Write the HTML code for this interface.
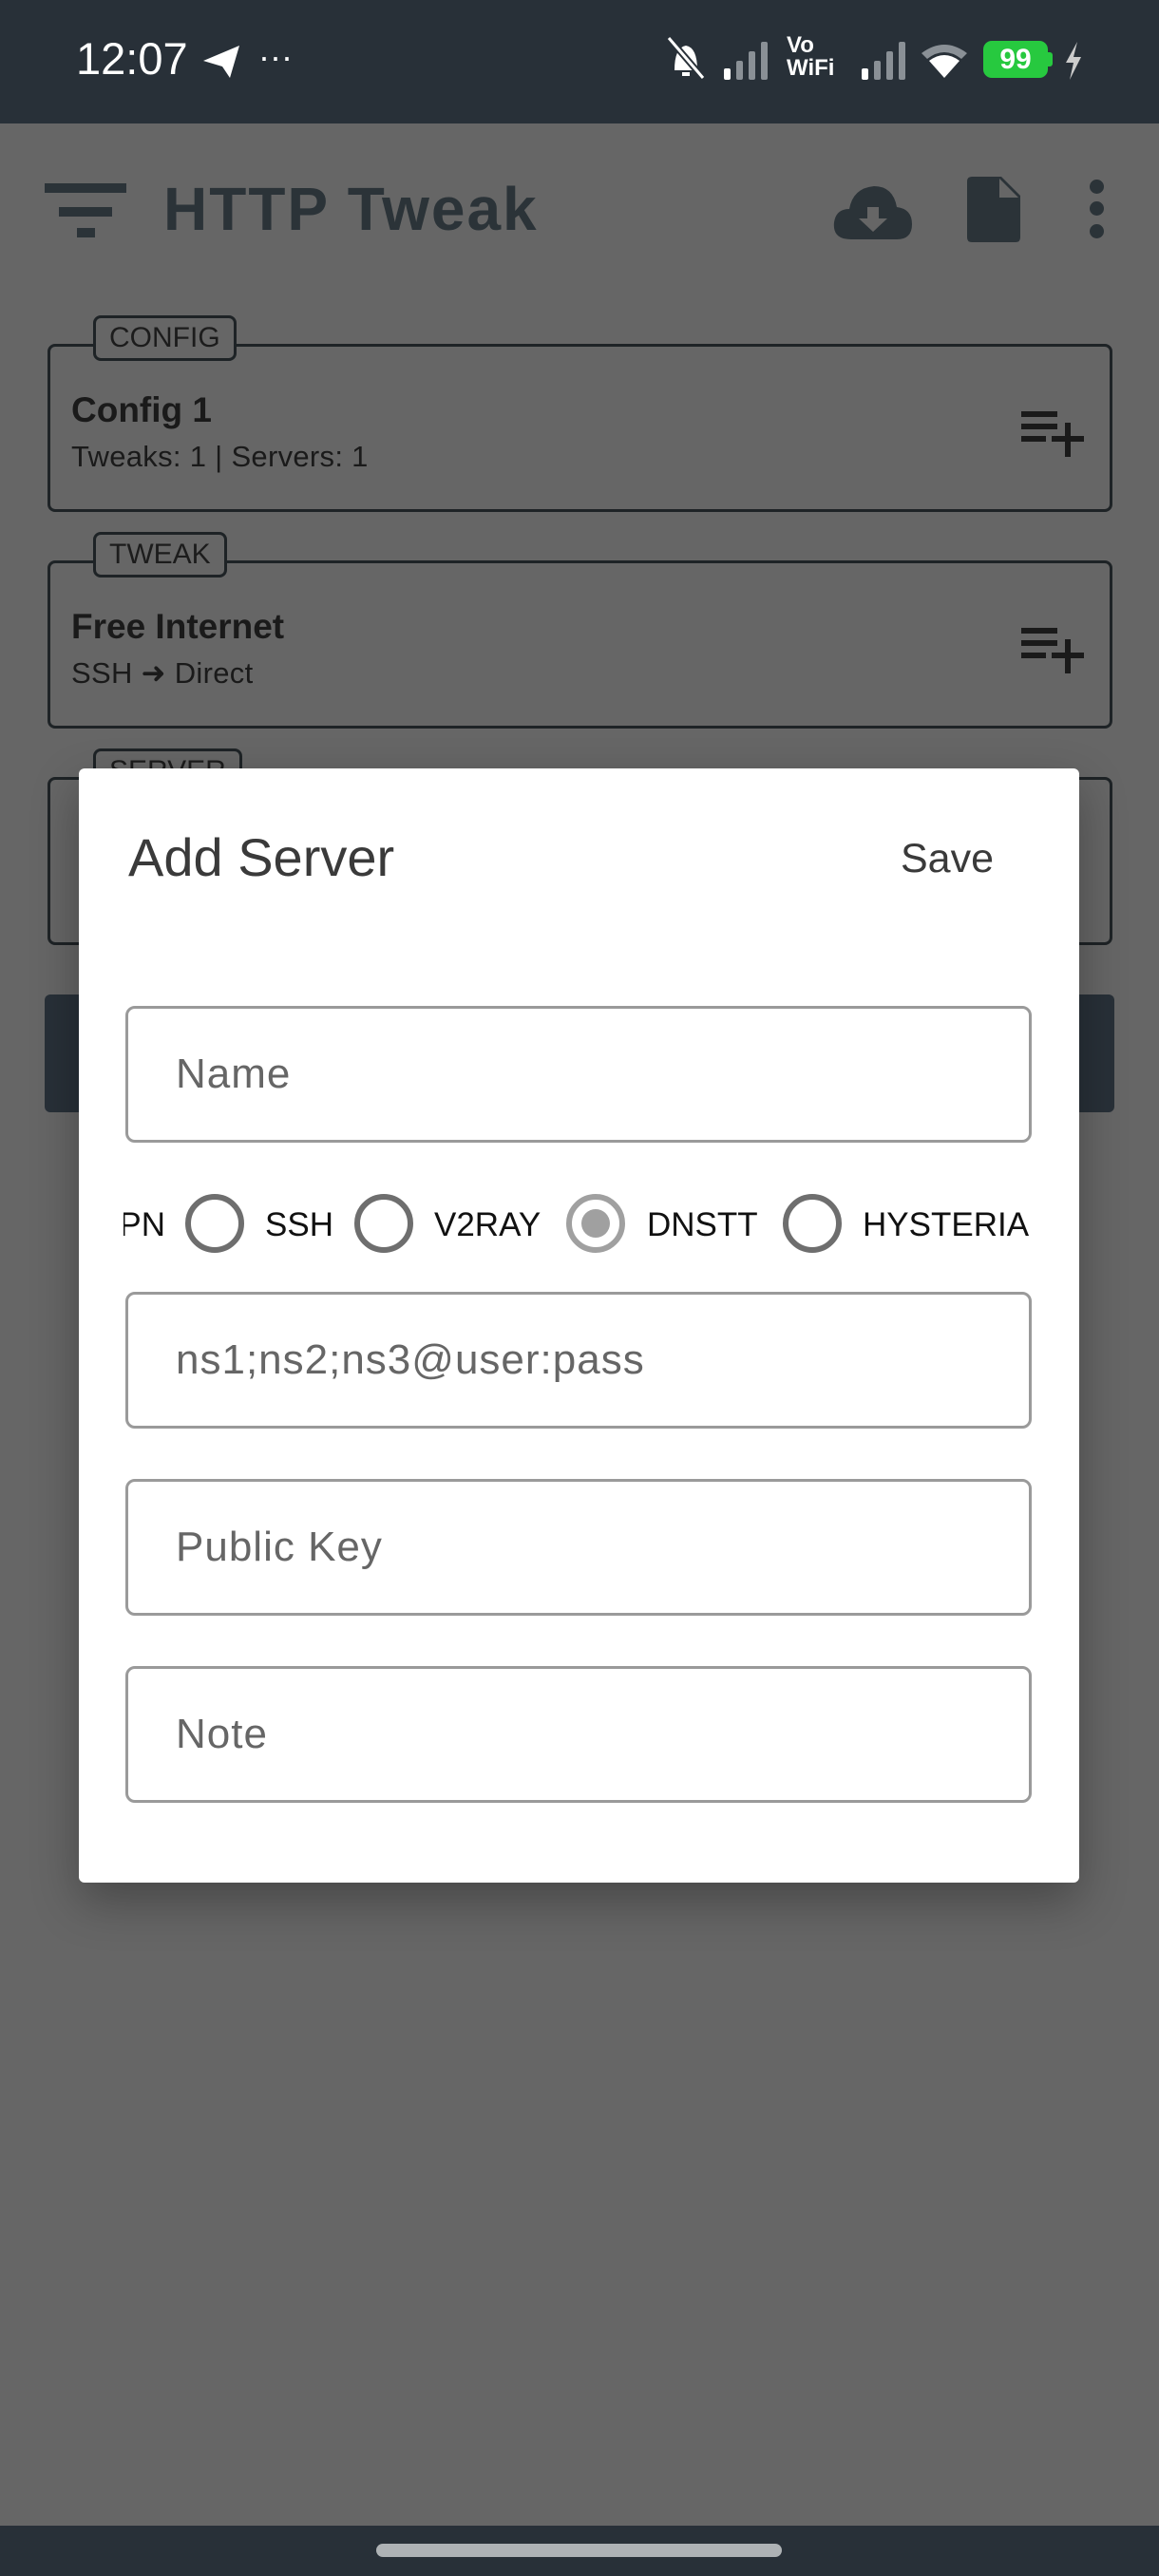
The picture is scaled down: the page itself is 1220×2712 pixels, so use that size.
<!DOCTYPE html>
<html><head><meta charset="utf-8"><style>
*{margin:0;padding:0;box-sizing:border-box}
body{width:1220px;height:2712px;position:relative;overflow:hidden;background:#666;font-family:"Liberation Sans",sans-serif}
.abs{position:absolute}
.sb{left:0;top:0;width:1220px;height:130px;background:#283038}
.card{border:3px solid #1e2326;border-radius:8px;left:50px;width:1121px;height:177px}
.lbl{border:3px solid #1e2326;border-radius:8px;background:#666;font-size:30px;color:#1c1c1c;height:48px;line-height:42px;padding:0 14px;left:98px}
.t1{font-size:37px;font-weight:bold;color:#1a1a1a;left:75px}
.t2{font-size:31px;color:#1a1a1a;left:75px;letter-spacing:0.3px}
.field{left:132px;width:954px;height:144px;border:3px solid #9a9a9a;border-radius:10px;background:#fff}
.field span{position:absolute;left:50px;top:0;line-height:138px;font-size:44px;color:#666;letter-spacing:1px}
.radio{width:62px;height:62px;border-radius:50%;border:6px solid #6e6e6e;top:1257px}
.rt{font-size:35px;color:#111;top:1269px;line-height:42px}
</style></head><body>
<div class="abs sb"></div>
<div class="abs" style="left:80px;top:32px;font-size:47px;color:#fff;line-height:60px">12:07</div>
<svg class="abs" style="left:212px;top:46px" width="44" height="38" viewBox="0 0 44 38"><path d="M2 18 L40 2 L30 36 L22 24 Z" fill="#fff"/></svg>
<div class="abs" style="left:272px;top:40px;font-size:36px;color:#fff;line-height:40px">···</div>
<svg class="abs" style="left:692px;top:36px" width="60" height="50" viewBox="0 0 60 50"><path d="M18 38 Q18 14 30 12 Q42 14 42 38 Z M26 40 h8 v4 h-8z" fill="#fff"/><line x1="12" y1="4" x2="48" y2="46" stroke="#283038" stroke-width="7"/><line x1="12" y1="4" x2="48" y2="46" stroke="#fff" stroke-width="3"/></svg>
<svg class="abs" style="left:760px;top:44px" width="50" height="40" viewBox="0 0 50 40"><rect x="2" y="28" width="7" height="12" rx="2" fill="#fff"/><rect x="15" y="20" width="7" height="20" rx="2" fill="#8a9096"/><rect x="28" y="10" width="7" height="30" rx="2" fill="#8a9096"/><rect x="41" y="0" width="7" height="40" rx="2" fill="#8a9096"/></svg>
<div class="abs" style="left:828px;top:36px;font-size:24px;font-weight:bold;color:#fff;line-height:24px">Vo<br>WiFi</div>
<svg class="abs" style="left:905px;top:44px" width="50" height="40" viewBox="0 0 50 40"><rect x="2" y="28" width="7" height="12" rx="2" fill="#fff"/><rect x="15" y="20" width="7" height="20" rx="2" fill="#8a9096"/><rect x="28" y="10" width="7" height="30" rx="2" fill="#8a9096"/><rect x="41" y="0" width="7" height="40" rx="2" fill="#8a9096"/></svg>
<svg class="abs" style="left:968px;top:44px" width="52" height="40" viewBox="0 0 52 40"><path d="M2 12 Q26 -6 50 12 L44 18 Q26 4 8 18Z" fill="#8a9096"/><path d="M10 20 Q26 8 42 20 L26 38Z" fill="#fff"/></svg>
<div class="abs" style="left:1035px;top:43px;width:68px;height:39px;background:#27c93f;border-radius:9px;color:#fff;font-weight:bold;font-size:30px;text-align:center;line-height:39px">99</div>
<div class="abs" style="left:1103px;top:55px;width:5px;height:15px;background:#27c93f;border-radius:0 3px 3px 0"></div>
<svg class="abs" style="left:1118px;top:44px" width="24" height="40" viewBox="0 0 24 40"><path d="M16 0 L4 22 H12 L8 40 L20 16 H12Z" fill="#ccc"/></svg>

<!-- header -->
<svg class="abs" style="left:47px;top:192px" width="86" height="60" viewBox="0 0 86 60"><rect x="0" y="1" width="86" height="10" fill="#2b3338"/><rect x="15" y="26" width="56" height="10" fill="#2b3338"/><rect x="34" y="48" width="19" height="10" fill="#2b3338"/></svg>
<div class="abs" style="left:172px;top:184px;font-size:64px;font-weight:bold;color:#2b3338;line-height:72px;letter-spacing:2px">HTTP Tweak</div>
<svg class="abs" style="left:876px;top:190px" width="86" height="64" viewBox="0 0 86 64"><path d="M20 62 Q0 62 2 44 Q4 30 18 30 Q22 8 44 6 Q64 6 68 28 Q84 30 84 46 Q84 62 68 62Z" fill="#2b3338"/><path d="M37 28 h12 v12 h9 l-15 14 l-15 -14 h9z" fill="#666"/></svg>
<svg class="abs" style="left:1018px;top:186px" width="58" height="70" viewBox="0 0 58 70"><path d="M5 0 H36 L56 20 V64 Q56 69 51 69 H5 Q0 69 0 64 V5 Q0 0 5 0Z" fill="#2b3338"/><path d="M34 2 V22 H54Z" fill="#666"/></svg>
<div class="abs" style="left:1147px;top:189px;width:15px;height:15px;border-radius:50%;background:#2b3338"></div>
<div class="abs" style="left:1147px;top:212px;width:15px;height:15px;border-radius:50%;background:#2b3338"></div>
<div class="abs" style="left:1147px;top:236px;width:15px;height:15px;border-radius:50%;background:#2b3338"></div>

<!-- cards -->
<div class="abs card" style="top:362px"></div>
<div class="abs lbl" style="top:332px">CONFIG</div>
<div class="abs t1" style="top:411px">Config 1</div>
<div class="abs t2" style="top:463px">Tweaks: 1 | Servers: 1</div>
<svg class="abs" style="left:1075px;top:433px" width="66" height="48" viewBox="0 0 66 48"><rect x="0" y="0" width="38" height="6" fill="#1a1a1a"/><rect x="0" y="13" width="38" height="6" fill="#1a1a1a"/><rect x="0" y="26" width="26" height="6" fill="#1a1a1a"/><rect x="32" y="26" width="34" height="6" fill="#1a1a1a"/><rect x="46" y="12" width="6" height="36" fill="#1a1a1a"/></svg>

<div class="abs card" style="top:590px"></div>
<div class="abs lbl" style="top:560px">TWEAK</div>
<div class="abs t1" style="top:639px">Free Internet</div>
<div class="abs t2" style="top:691px">SSH ➜ Direct</div>
<svg class="abs" style="left:1075px;top:661px" width="66" height="48" viewBox="0 0 66 48"><rect x="0" y="0" width="38" height="6" fill="#1a1a1a"/><rect x="0" y="13" width="38" height="6" fill="#1a1a1a"/><rect x="0" y="26" width="26" height="6" fill="#1a1a1a"/><rect x="32" y="26" width="34" height="6" fill="#1a1a1a"/><rect x="46" y="12" width="6" height="36" fill="#1a1a1a"/></svg>

<div class="abs card" style="top:818px"></div>
<div class="abs lbl" style="top:788px">SERVER</div>
<div class="abs" style="left:47px;top:1047px;width:1126px;height:124px;background:#283038;border-radius:6px"></div>

<!-- dialog -->
<div class="abs" style="left:83px;top:809px;width:1053px;height:1173px;background:#fff;border-radius:6px;box-shadow:0 20px 50px rgba(0,0,0,0.3)"></div>
<div class="abs" style="left:135px;top:870px;font-size:56px;color:#3a3a3a;line-height:66px">Add Server</div>
<div class="abs" style="left:948px;top:878px;font-size:43px;color:#3a3a3a;line-height:52px">Save</div>
<div class="abs field" style="top:1059px"><span>Name</span></div>

<div class="abs" style="left:130px;top:1240px;width:50px;height:100px;overflow:hidden">
<div class="abs rt" style="right:6px;top:29px">VPN</div>
</div>
<div class="abs radio" style="left:195px"></div>
<div class="abs rt" style="left:279px">SSH</div>
<div class="abs radio" style="left:373px"></div>
<div class="abs rt" style="left:457px">V2RAY</div>
<div class="abs radio" style="left:596px;border-color:#a0a0a0"></div>
<div class="abs" style="left:612px;top:1273px;width:30px;height:30px;border-radius:50%;background:#a0a0a0"></div>
<div class="abs rt" style="left:681px">DNSTT</div>
<div class="abs radio" style="left:824px"></div>
<div class="abs rt" style="left:908px">HYSTERIA</div>

<div class="abs field" style="top:1360px"><span>ns1;ns2;ns3@user:pass</span></div>
<div class="abs field" style="top:1557px"><span>Public Key</span></div>
<div class="abs field" style="top:1754px"><span>Note</span></div>

<!-- nav -->
<div class="abs" style="left:0;top:2659px;width:1220px;height:53px;background:#283038"></div>
<div class="abs" style="left:396px;top:2678px;width:427px;height:14px;border-radius:7px;background:#aeb2b5"></div>
</body></html>
